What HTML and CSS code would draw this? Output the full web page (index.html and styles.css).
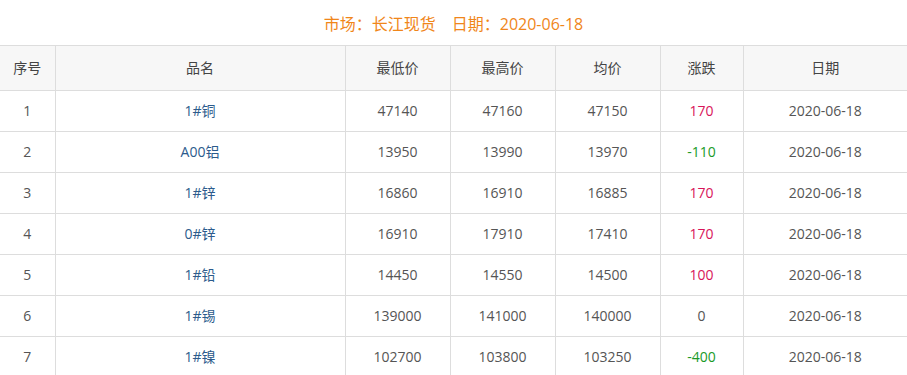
FILE: index.html
```html
<!DOCTYPE html>
<html lang="zh-CN">
<head>
<meta charset="utf-8">
<title>长江现货</title>
<link rel="stylesheet" href="styles.css">
</head>
<body>
<div class="title">市场：长江现货　日期：2020-06-18</div>
<table class="price-table">
  <colgroup>
    <col class="c-no"><col class="c-name"><col class="c-num"><col class="c-num"><col class="c-num"><col class="c-chg"><col class="c-date">
  </colgroup>
  <thead>
    <tr><th>序号</th><th>品名</th><th>最低价</th><th>最高价</th><th>均价</th><th>涨跌</th><th>日期</th></tr>
  </thead>
  <tbody>
    <tr><td>1</td><td class="name">1#铜</td><td>47140</td><td>47160</td><td>47150</td><td class="up">170</td><td>2020-06-18</td></tr>
    <tr><td>2</td><td class="name">A00铝</td><td>13950</td><td>13990</td><td>13970</td><td class="down">-110</td><td>2020-06-18</td></tr>
    <tr><td>3</td><td class="name">1#锌</td><td>16860</td><td>16910</td><td>16885</td><td class="up">170</td><td>2020-06-18</td></tr>
    <tr><td>4</td><td class="name">0#锌</td><td>16910</td><td>17910</td><td>17410</td><td class="up">170</td><td>2020-06-18</td></tr>
    <tr><td>5</td><td class="name">1#铅</td><td>14450</td><td>14550</td><td>14500</td><td class="up">100</td><td>2020-06-18</td></tr>
    <tr><td>6</td><td class="name">1#锡</td><td>139000</td><td>141000</td><td>140000</td><td>0</td><td>2020-06-18</td></tr>
    <tr><td>7</td><td class="name">1#镍</td><td>102700</td><td>103800</td><td>103250</td><td class="down">-400</td><td>2020-06-18</td></tr>
  </tbody>
</table>
</body>
</html>
```
FILE: styles.css
```css
html, body {
  margin: 0;
  padding: 0;
  background: #fff;
}
body {
  font-family: "Open Sans", "Noto Sans CJK SC", "Noto Sans", sans-serif;
  color: #555;
  font-size: 14px;
}
.title {
  height: 45px;
  line-height: 48px;
  text-align: center;
  font-size: 16px;
  color: #f0861a;
}
.price-table {
  width: 907px;
  border-collapse: collapse;
  table-layout: fixed;
}
.c-no { width: 55px; }
.c-name { width: 290px; }
.c-num { width: 105px; }
.c-chg { width: 83px; }
.c-date { width: 164px; }
.price-table th,
.price-table td {
  border: 1px solid #dddddd;
  text-align: center;
  padding: 0;
  font-weight: normal;
  line-height: 20px;
}
.price-table th:first-child,
.price-table td:first-child { border-left: none; }
.price-table th:last-child,
.price-table td:last-child { border-right: none; }
.price-table th {
  height: 44px;
  background: #f7f7f7;
  color: #444;
}
.price-table td {
  height: 40px;
}
.price-table .name { color: #2c5b8c; }
.price-table .up { color: #d8145a; }
.price-table .down { color: #1a9a28; }
```
